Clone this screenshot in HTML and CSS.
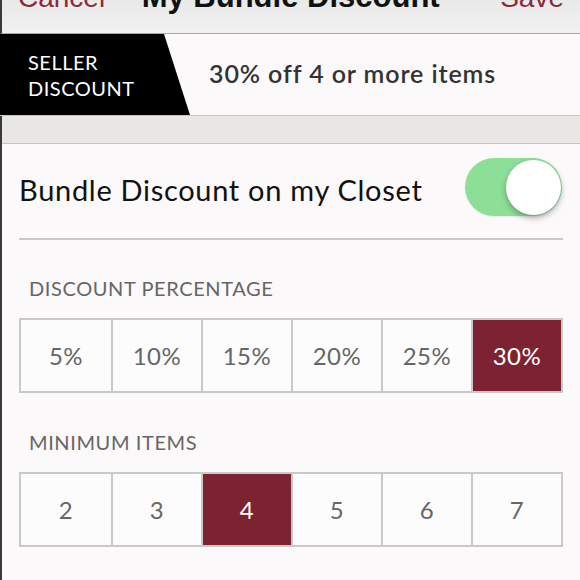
FILE: index.html
```html
<!DOCTYPE html>
<html>
<head>
<meta charset="utf-8">
<link rel="stylesheet" href="styles.css">
</head>
<body>
<div class="app">
  <header class="topbar">
    <div class="nav">
      <span class="nav-btn">Cancel</span>
      <span class="nav-title">My Bundle Discount</span>
      <span class="nav-btn">Save</span>
    </div>
  </header>
  <div class="seller">
    <div class="badge"><span>SELLER<br>DISCOUNT</span></div>
    <div class="summary">30% off 4 or more items</div>
  </div>
  <div class="band"></div>
  <main class="content">
    <div class="toggle-row">
      <span class="toggle-label">Bundle Discount on my Closet</span>
      <span class="switch"><span class="knob"></span></span>
    </div>
    <div class="divider"></div>
    <div class="section-label">DISCOUNT PERCENTAGE</div>
    <div class="seg">
      <div class="cell">5%</div>
      <div class="cell">10%</div>
      <div class="cell">15%</div>
      <div class="cell">20%</div>
      <div class="cell">25%</div>
      <div class="cell active">30%</div>
    </div>
    <div class="section-label">MINIMUM ITEMS</div>
    <div class="seg">
      <div class="cell">2</div>
      <div class="cell">3</div>
      <div class="cell active">4</div>
      <div class="cell">5</div>
      <div class="cell">6</div>
      <div class="cell">7</div>
    </div>
  </main>
</div>
</body>
</html>
```
FILE: styles.css
```css
* { box-sizing: border-box; }
html, body { margin: 0; padding: 0; }
body {
  width: 580px;
  height: 580px;
  overflow: hidden;
  background: #fbf9f9;
  font-family: Lato, "Noto Sans", sans-serif;
}
.app {
  height: 580px;
  border-left: 2px solid #3a3a3a;
  background: #fbf9f9;
}
.topbar {
  height: 34px;
  overflow: hidden;
  background: linear-gradient(180deg, #e9e9e9 0%, #f2f1f1 100%);
  border-bottom: 1px solid #a8a8a8;
  margin-left: -2px;
  border-left: 2px solid #3a3a3a;
}
.nav {
  display: flex;
  justify-content: space-between;
  align-items: baseline;
  margin-top: -17px;
  padding: 0 16px 0 16px;
  height: 28px;
  line-height: 28px;
  font-family: "Liberation Sans", Arial, sans-serif;
  font-size: 28px;
}
.nav-btn { color: #8c2a3a; }
.nav-title { color: #111; font-weight: bold; font-size: 31px; margin-right: 24px; }

.seller {
  display: flex;
  align-items: center;
  height: 82px;
  margin-left: -2px;
  background: #fbf9f9;
  border-bottom: 1px solid #c8c6c4;
}
.badge {
  align-self: stretch;
  width: 190px;
  background: #000;
  color: #fff;
  clip-path: polygon(0 0, 164px 0, 190px 100%, 0 100%);
  display: flex;
  align-items: center;
  padding-left: 28px;
  font-size: 20px;
  line-height: 26px;
  letter-spacing: 0.5px;
}
.summary {
  margin-left: 19px;
  margin-bottom: 4px;
  font-size: 25px;
  font-weight: 600;
  color: #333;
  letter-spacing: 0.9px;
}
.band {
  height: 28px;
  background: #e9e7e3;
  border-bottom: 1px solid #c6c4c2;
}
.content {
  padding: 0 17px 0 17px;
}
.toggle-row {
  display: flex;
  justify-content: space-between;
  align-items: center;
  padding: 14px 1px 22px 0;
}
.toggle-label {
  font-size: 29px;
  color: #111;
  letter-spacing: 0.7px;
  margin-top: 5px;
}
.switch {
  display: flex;
  justify-content: flex-end;
  align-items: center;
  width: 97px;
  height: 58px;
  border-radius: 29px;
  background: #8ddf98;
  padding: 1px;
  box-shadow: 0 1px 2px rgba(0,0,0,0.08);
}
.knob {
  width: 55px;
  height: 55px;
  border-radius: 50%;
  background: #fff;
  box-shadow: 0 3px 6px rgba(0,0,0,0.3);
}
.divider {
  height: 2px;
  background: #c9c9c9;
}
.section-label {
  margin-top: 36px;
  padding-left: 10px;
  font-size: 20px;
  line-height: 24px;
  color: #666;
  letter-spacing: 0.6px;
}
.seg {
  margin-top: 18px;
  display: grid;
  grid-template-columns: repeat(6, 1fr);
  border: 2px solid #c9c9c9;
  height: 75px;
}
.cell {
  display: flex;
  align-items: center;
  justify-content: center;
  font-size: 24px;
  color: #666;
  background: #fdfcfc;
  letter-spacing: 0.5px;
}
.cell + .cell { border-left: 2px solid #c9c9c9; }
.cell.active {
  background: #7d2231;
  color: #fff;
}
.seg + .section-label { margin-top: 37px; }
```
